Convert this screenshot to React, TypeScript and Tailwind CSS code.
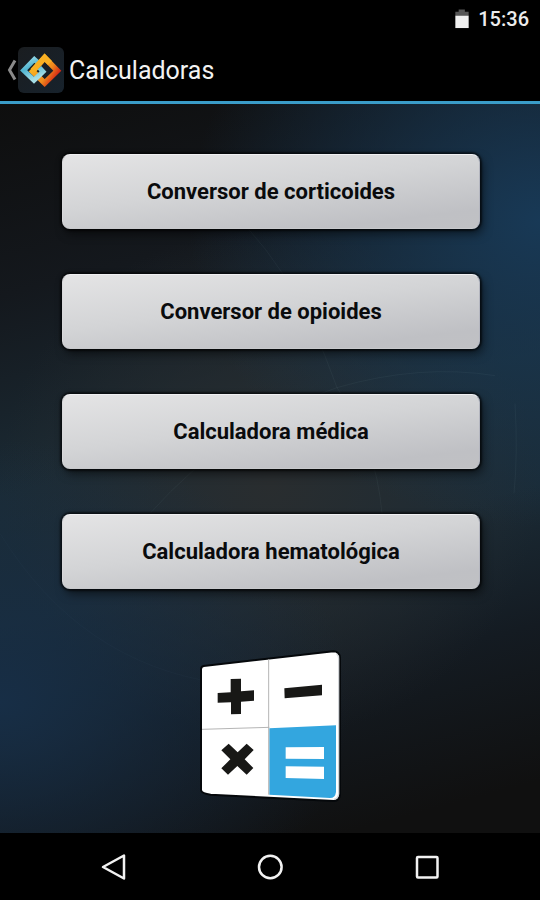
import React from 'react'

interface CalculatorItem{
  id:string
  label:string
}
const items:CalculatorItem[] = [
  {id:"corticoides",label:"Conversor de corticoides"},
  {id:"opioides",label:"Conversor de opioides"},
  {id:"medica",label:"Calculadora médica"},
  {id:"hematologica",label:"Calculadora hematológica"},
]

const StatusBar:React.FC = () => {
  return (
    <div className="flex h-[38px] items-center justify-end gap-2 bg-black pr-[11px] text-white">
      <svg viewBox="0 0 15 21" className="h-5 w-4" aria-hidden="true">
        <path d="M0.5 3h3.5V0.5h6.500V3h4v4h-14z" fill="#555" />
        <path d="M0.500 7h14v13h-14z" fill="#f0f0f0" />
      </svg>
      <span className="text-xl font-medium leading-6 text-[#ececec]">15:36</span>
    </div>
  )
}

const Logo:React.FC = () => {
  return (
    <svg viewBox="54 30 138 138" className="h-[46px] w-[46px]" aria-hidden="true">
      <defs>
        <linearGradient id="tile" x1="0" y1="0" x2="1" y2="1">
          <stop offset="0" stopColor="#1a1d20" />
          <stop offset="1" stopColor="#17222c" />
        </linearGradient>
        <linearGradient id="blue" x1="0" y1="0" x2="0.400" y2="1">
          <stop offset="0" stopColor="#9ad9e6" />
          <stop offset="0.450" stopColor="#4fb4d0" />
          <stop offset="1" stopColor="#a5dde6" />
        </linearGradient>
        <linearGradient id="orange" gradientUnits="userSpaceOnUse" x1="118" y1="70" x2="176" y2="108">
          <stop offset="0" stopColor="#f9b023" />
          <stop offset="0.600" stopColor="#f08a1c" />
          <stop offset="1" stopColor="#d42a16" />
        </linearGradient>
      </defs>
      <rect x="54" y="30" width="138" height="138" rx="18" fill="url(#tile)" />
      <path d="M134 62L172 101L134 138L98 103Z" fill="none" stroke="url(#orange)" strokeWidth="17" />
      <path d="M120 82L103 67L71 100L102 130L129 104L118 92" fill="none" stroke="url(#blue)" strokeWidth="15" />
      <path d="M98 101L134 62L150 78" fill="none" stroke="#f9b023" strokeWidth="17" />
    </svg>
  )
}

const Header:React.FC = () => {
  return (
    <header className="flex h-[66px] items-center border-b-[3px] border-[#3a9cc8] bg-black pl-1.5 shadow-[0_2px_3px_#000000]">
      <button type="button" aria-label="Volver" className="flex cursor-pointer items-center">
        <svg viewBox="0 0 12 24" className="h-6 w-3" aria-hidden="true">
          <path d="M9 2.500L3.500 12L9 21.500" fill="none" stroke="#8a8a8a" strokeWidth="3" />
        </svg>
        <Logo />
      </button>
      <h1 className="pt-0.5 pl-[5px] text-[25px] leading-8 text-[#f2f2f2]">Calculadoras</h1>
    </header>
  )
}

const MenuButton:React.FC<{label:string}> = ({label}) => {
  return (
    <button type="button" className="h-[75px] w-full cursor-pointer rounded-lg border border-t-[#f0f0f2] border-r-[#b4b6c0] border-b-[#c8c9cc] border-l-[#d8d8da] bg-[linear-gradient(173deg,#e4e4e5_0%,#d3d4d6_45%,#bfc0c4_85%,#c0c1c4_100%)] text-[22px] font-bold leading-7 text-[#0a0b0d] shadow-[0_0_2px_2px_rgba(0,0,0,0.6),3px_5px_10px_rgba(0,0,0,0.5)]">
      {label}
    </button>
  )
}

const CalculatorArt:React.FC = () => {
  return (
    <svg viewBox="27 27 432 462" className="h-[154px] w-36" role="img" aria-label="Calculadora">
      <path d="M33 88Q33 80 41 78L430 34Q448 34 450 54V464Q448 482 432 483L62 464Q34 460 33 450Z" fill="#fff" stroke="#05080b" strokeWidth="6" strokeLinejoin="round" />
      <path d="M440 42Q446 46 446 56V462Q444 476 432 478" fill="none" stroke="#d2d5d8" strokeWidth="4" />
      <path d="M238 265L438 256V456Q436 474 420 474L238 464Z" fill="#33a6df" />
      <path d="M236 58V464M36 268L238 262" fill="none" stroke="#b5b5b5" strokeWidth="3" />
      <path d="M122 117L153 116V154L192 151V182L153 185V222L123 223V187L83 188V159L122 157Z" fill="#181816" />
      <path d="M283 145L396 134V166L284 175Z" fill="#181816" />
      <path d="M116 311L143 337L170 311L191 330L164 358L190 384L170 404L142 378L114 404L94 385L121 358L94 331Z" fill="#181816" />
      <path d="M287 322L402 321V357L287 356ZM287 379L402 380V417L287 414Z" fill="#fff" />
    </svg>
  )
}

// faint arcs on the wallpaper
const Wallpaper:React.FC = () => {
  return (
    <svg viewBox="0 0 540 730" preserveAspectRatio="none" className="absolute inset-0 h-full w-full" aria-hidden="true">
      <g fill="none" stroke="#9fc0d0" strokeOpacity="0.06">
        <path d="M210 90Q290 150 337 284Q376 340 382 410" />
        <path d="M150 410Q230 320 337 284Q420 260 495 272" />
        <path d="M0 430Q80 560 220 580" strokeOpacity="0.03" />
        <path d="M515 300Q518 350 514 390" />
      </g>
    </svg>
  )
}

const NavBar:React.FC = () => {
  return (
    <nav aria-label="Sistema" className="grid h-[67px] grid-cols-3 items-center bg-black px-9">
      <button type="button" aria-label="Atrás" className="flex cursor-pointer justify-center">
        <svg viewBox="0 0 28 28" className="h-7 w-7" fill="none" stroke="#f2f2f2" strokeWidth="2.500" strokeLinejoin="round" aria-hidden="true"><path d="M24 2.500V25.500L3 14Z" /></svg>
      </button>
      <button type="button" aria-label="Inicio" className="flex cursor-pointer justify-center">
        <svg viewBox="0 0 28 28" className="h-7 w-7" fill="none" stroke="#f2f2f2" strokeWidth="2.500" aria-hidden="true"><circle cx="14.300" cy="14" r="11.300" /></svg>
      </button>
      <button type="button" aria-label="Recientes" className="flex cursor-pointer justify-center">
        <svg viewBox="0 0 28 28" className="h-7 w-7" fill="none" stroke="#f2f2f2" strokeWidth="2.500" aria-hidden="true"><rect x="5" y="4" width="20.500" height="20.500" rx="1" /></svg>
      </button>
    </nav>
  )
}

const App:React.FC = () => {
  return (
    <div className="flex min-h-screen flex-col bg-black font-['Roboto',sans-serif]">
      <StatusBar />
      <Header />
      <main className="relative flex flex-1 flex-col bg-[radial-gradient(ellipse_65%_42%_at_100%_16%,#183956_0%,#18395699_40%,transparent_100%),radial-gradient(ellipse_65%_36%_at_0%_82%,#172e46_0%,#172e4680_45%,transparent_100%),radial-gradient(ellipse_50%_35%_at_50%_52%,#292d2f_0%,transparent_100%),linear-gradient(165deg,#0e0e0e_0%,#14181d_22%,#1b2b35_45%,#1b2b36_60%,#141b22_76%,#101010_94%)]">
        <Wallpaper />
        <div className="relative flex flex-col items-center gap-15 pt-[50px] pr-[60px] pb-6 pl-[62px]">
          <div className="flex w-full flex-col gap-[45px]">
            {items.map((item)=><MenuButton key={item.id} label={item.label} />)}
          </div>
          <CalculatorArt />
        </div>
      </main>
      <NavBar />
    </div>
  )
}

export default App
